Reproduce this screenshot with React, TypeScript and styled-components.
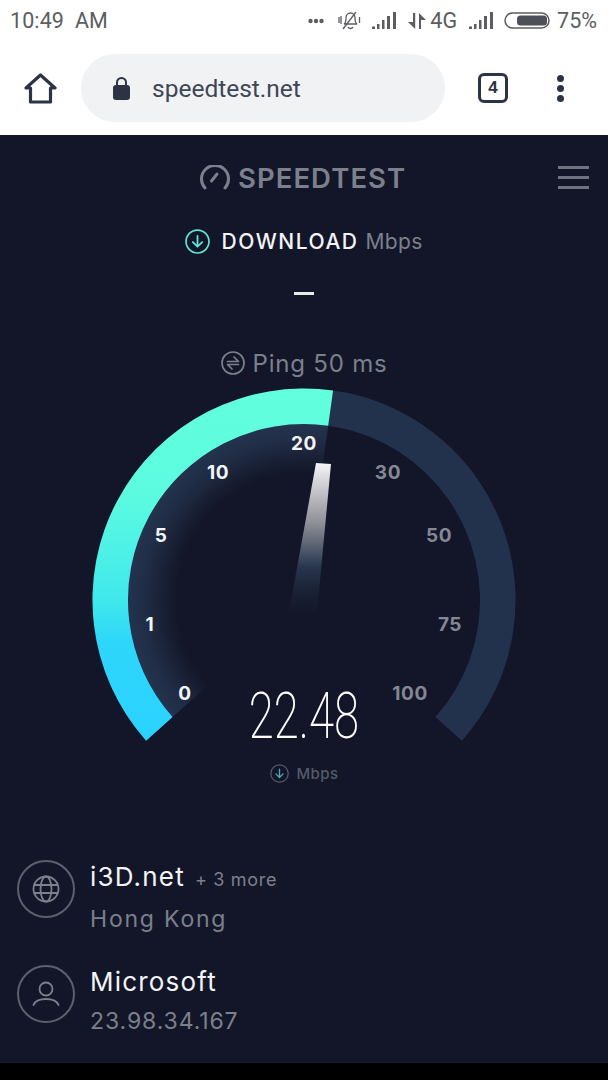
import React from "react";
import styled, { createGlobalStyle } from "styled-components";

const Global = createGlobalStyle`
  html, body { margin: 0; padding: 0; background: #000; }
  * { box-sizing: border-box; }
`;

const Page = styled.div`
  width: 608px;
  height: 1080px;
  display: flex;
  flex-direction: column;
  background: #000;
  overflow: hidden;
  font-family: Inter, "Liberation Sans", sans-serif;
`;

const TopChrome = styled.header`
  height: 135px;
  background: #fff;
  display: flex;
  flex-direction: column;
  flex: none;
`;

const StatusBar = styled.div`
  height: 44px;
  display: flex;
  align-items: center;
  justify-content: space-between;
  padding: 0 11px 3px 10px;
  color: #5b5d60;
  font-family: Roboto, "Liberation Sans", sans-serif;
  font-size: 21.5px;
`;

const StatusTime = styled.span`
  white-space: pre;
  letter-spacing: 0.1px;
`;

const StatusIcons = styled.div`
  display: flex;
  align-items: center;
`;

const StatusItem = styled.span<{ $gap: number }>`
  display: flex;
  align-items: center;
  margin-left: ${(p) => p.$gap}px;
`;

const Toolbar = styled.div`
  height: 91px;
  display: flex;
  align-items: center;
  padding-bottom: 3px;
`;

const HomeSlot = styled.div`
  display: flex;
  width: 81px;
  padding-left: 24px;
`;

const UrlPill = styled.div`
  width: 364px;
  height: 68px;
  border-radius: 34px;
  background: #f0f2f4;
  display: flex;
  align-items: center;
  padding-left: 32px;
  gap: 22px;
  color: #3f4656;
  font-family: Roboto, "Liberation Sans", sans-serif;
  font-size: 24.5px;
`;

const TabCount = styled.div`
  width: 30px;
  height: 30px;
  margin-left: 33px;
  border: 3px solid #2c3344;
  border-radius: 6px;
  display: flex;
  align-items: center;
  justify-content: center;
  color: #2c3344;
  font-family: "Liberation Sans", sans-serif;
  font-weight: 700;
  font-size: 17px;
`;

const MenuDots = styled.div`
  margin-left: 49px;
  display: flex;
  flex-direction: column;
  align-items: center;
  gap: 3px;
`;

const MenuDot = styled.span`
  width: 7px;
  height: 7px;
  border-radius: 50%;
  background: #2c3344;
`;

const Stage = styled.main`
  height: 928px;
  background: #131628;
  display: flex;
  flex-direction: column;
  align-items: center;
  flex: none;
  position: relative;
`;

const Brand = styled.div`
  height: 84px;
  width: 100%;
  display: grid;
  grid-template-columns: 200px 1fr 50px;
  align-items: center;
  color: #7c808c;
`;

const BrandMark = styled.div`
  grid-column: 2;
  display: flex;
  align-items: center;
  gap: 8px;
`;

const BrandName = styled.span`
  font-size: 27.5px;
  font-weight: 600;
  letter-spacing: 1.05px;
  line-height: 1;
  padding-top: 3px;
`;

const Burger = styled.div`
  display: flex;
  flex-direction: column;
  gap: 7px;
  width: 31px;
`;

const BurgerLine = styled.span`
  height: 3px;
  background: #6f7380;
`;

const DirectionRow = styled.div`
  height: 46px;
  display: flex;
  align-items: center;
  font-size: 21px;
  margin-top: -1px;
`;

const DirectionName = styled.span`
  color: #f3f4f6;
  font-weight: 500;
  letter-spacing: 1.55px;
  margin: 0 7px 0 11px;
`;

const DirectionUnit = styled.span`
  color: #7c808c;
  letter-spacing: 0.3px;
`;

const Dash = styled.div`
  width: 20px;
  height: 3px;
  background: #e8e9ec;
  margin-top: 28px;
`;

const PingRow = styled.div`
  display: flex;
  align-items: center;
  gap: 8px;
  margin-top: 54px;
  height: 28px;
  color: #7c808c;
  font-size: 24px;
  letter-spacing: 0.8px;
`;

const Gauge = styled.div`
  position: relative;
  width: 608px;
  height: 380px;
  margin-top: 3px;
`;

const GaugeSvg = styled.svg`
  display: block;
`;

const Tick = styled.text<{ $active?: boolean }>`
  font-family: Inter, "Liberation Sans", sans-serif;
  font-weight: 700;
  font-size: 19px;
  letter-spacing: 0.6px;
  fill: ${(p) => (p.$active ? "#f2f4f6" : "#858894")};
  text-anchor: middle;
  dominant-baseline: central;
`;

const Reading = styled.div`
  position: absolute;
  left: 0;
  right: 0;
  top: 301px;
  display: flex;
  flex-direction: column;
  align-items: center;
`;

const ReadingValue = styled.div`
  font-family: Roboto, "Liberation Sans", sans-serif;
  font-weight: 200;
  font-size: 65px;
  line-height: 70px;
  color: #fff;
  transform: scaleX(0.7);
`;

const ReadingUnit = styled.div`
  display: flex;
  align-items: center;
  gap: 8px;
  margin-top: 13px;
  color: #555b6a;
  font-size: 15px;
  font-weight: 500;
  letter-spacing: 0.4px;
`;

const Servers = styled.section`
  width: 100%;
  display: flex;
  flex-direction: column;
  gap: 28px;
  padding: 99px 0 0 17px;
`;

const ServerRow = styled.div`
  display: flex;
  gap: 15px;
  align-items: flex-start;
`;

const ServerBadge = styled.div`
  width: 58px;
  height: 58px;
  border: 2px solid #5c606d;
  border-radius: 50%;
  display: flex;
  align-items: center;
  justify-content: center;
  flex: none;
  margin-top: 1px;
`;

const ServerText = styled.div`
  display: flex;
  flex-direction: column;
  gap: 4px;
`;

const ServerName = styled.div`
  display: flex;
  align-items: baseline;
  gap: 10px;
  color: #f3f4f6;
  font-size: 26px;
  line-height: 36px;
  letter-spacing: 1.2px;
`;

const ServerExtra = styled.span`
  color: #7c808c;
  font-size: 18px;
  letter-spacing: 0.7px;
`;

const ServerDetail = styled.div<{ $tracking: number }>`
  color: #7c808c;
  font-size: 23px;
  line-height: 34px;
  letter-spacing: ${(p) => p.$tracking}px;
`;

const CX = 304;
const CY = 220;

const polar = (r: number, deg: number): [number, number] => {
  const a = (deg * Math.PI) / 180;
  return [CX + r * Math.sin(a), CY - r * Math.cos(a)];
};

const band = (outer: number, inner: number, from: number, to: number) => {
  const [ax, ay] = polar(outer, from);
  const [bx, by] = polar(outer, to);
  const [cx, cy] = polar(inner, to);
  const [dx, dy] = polar(inner, from);
  const large = to - from > 180 ? 1 : 0;
  return `M${ax} ${ay}A${outer} ${outer} 0 ${large} 1 ${bx} ${by}L${cx} ${cy}A${inner} ${inner} 0 ${large} 0 ${dx} ${dy}Z`;
};

const ticks = [
  { label: "0", x: 185, y: 313, active: true },
  { label: "1", x: 150, y: 244, active: true },
  { label: "5", x: 161, y: 155, active: true },
  { label: "10", x: 218, y: 92, active: true },
  { label: "20", x: 304, y: 63, active: true },
  { label: "30", x: 388, y: 92 },
  { label: "50", x: 439, y: 155 },
  { label: "75", x: 450, y: 244 },
  { label: "100", x: 410, y: 313 },
];

const DownCircle = ({ size, color, arrow }: { size: number; color: string; arrow: string }) => (
  <svg width={size} height={size} viewBox="0 0 24 24" fill="none">
    <circle cx="12" cy="12" r="11" stroke={color} strokeWidth="1.6" />
    <path d="M12 6.500v10M7.500 12.500l4.500 4.500 4.500-4.500" stroke={arrow} strokeWidth="1.7" strokeLinecap="round" strokeLinejoin="round" />
  </svg>
);

const Signal = () => (
  <svg width="25" height="17" viewBox="0 0 25 17" fill="#5b5d60">
    <rect x="0" y="14.500" width="3" height="2.500" />
    <rect x="5" y="12" width="2.500" height="5" />
    <rect x="10" y="8" width="2.500" height="9" />
    <rect x="15" y="4" width="3" height="13" />
    <rect x="21" y="0" width="3" height="17" />
  </svg>
);

export default function App() {
  return (
    <Page>
      <Global />
      <TopChrome>
        <StatusBar>
          <StatusTime>10:49  AM</StatusTime>
          <StatusIcons>
            <StatusItem $gap={0}>
              <svg width="16" height="6" viewBox="0 0 16 6" fill="#5b5d60">
                <circle cx="2.500" cy="3" r="2.200" />
                <circle cx="8" cy="3" r="2.200" />
                <circle cx="13.500" cy="3" r="2.200" />
              </svg>
            </StatusItem>
            <StatusItem $gap={14}>
              <svg width="24" height="20" viewBox="0 0 24 20" fill="none" stroke="#5b5d60" strokeWidth="1.300">
                <path d="M6 13c2-1 2-3 2-6s2-5 4.500-5S17 4 17 7s0 5 2 6z" />
                <path d="M10 16c1 2 4 2 5 0" />
                <path d="M5 18L18 1" />
                <path d="M1 6v6M3 5v8M21.500 6v6" />
              </svg>
            </StatusItem>
            <StatusItem $gap={10}>
              <Signal />
            </StatusItem>
            <StatusItem $gap={10}>
              <svg width="20" height="18" viewBox="0 0 20 18" fill="#5b5d60">
                <path d="M6 1h2.200v16L1 10h5zM12 1l7 7h-5v9h-2z" />
              </svg>
            </StatusItem>
            <StatusItem $gap={3}>4G</StatusItem>
            <StatusItem $gap={12}>
              <Signal />
            </StatusItem>
            <StatusItem $gap={10}>
              <svg width="46" height="17" viewBox="0 0 46 17" fill="none">
                <rect x="1" y="1" width="44" height="15" rx="7.500" stroke="#5b5d60" strokeWidth="1.500" />
                <rect x="13" y="3.500" width="30" height="10" rx="3.500" fill="#4d5058" />
              </svg>
            </StatusItem>
            <StatusItem $gap={7}>75%</StatusItem>
          </StatusIcons>
        </StatusBar>
        <Toolbar>
          <HomeSlot>
            <svg width="33" height="31" viewBox="0 0 33 31" fill="none" stroke="#2c3344" strokeWidth="3.200" strokeLinejoin="round" strokeLinecap="round">
              <path d="M2 15L16.500 2 31 15h-4.500v14h-20V15z" />
            </svg>
          </HomeSlot>
          <UrlPill>
            <svg width="17" height="23" viewBox="0 0 17 23" fill="none">
              <rect x="0" y="8" width="17" height="15" rx="3" fill="#2c3344" />
              <path d="M4 9V5.500a4.500 4.500 0 0 1 9 0V9" stroke="#2c3344" strokeWidth="2" />
            </svg>
            <span>speedtest.net</span>
          </UrlPill>
          <TabCount>4</TabCount>
          <MenuDots>
            <MenuDot />
            <MenuDot />
            <MenuDot />
          </MenuDots>
        </Toolbar>
      </TopChrome>
      <Stage>
        <Brand>
          <BrandMark>
            <svg width="30" height="25" viewBox="0 0 30 25" fill="none" stroke="#7c808c" strokeWidth="3" strokeLinecap="round">
              <path d="M5 23a13.500 13.500 0 1 1 20 0" />
              <path d="M11.500 16l5.500-7" />
            </svg>
            <BrandName>SPEEDTEST</BrandName>
          </BrandMark>
          <Burger>
            <BurgerLine />
            <BurgerLine />
            <BurgerLine />
          </Burger>
        </Brand>
        <DirectionRow>
          <DownCircle size={25} color="#5fe5d8" arrow="#5fe5d8" />
          <DirectionName>DOWNLOAD</DirectionName>
          <DirectionUnit>Mbps</DirectionUnit>
        </DirectionRow>
        <Dash />
        <PingRow>
          <svg width="24" height="24" viewBox="0 0 24 24" fill="none" stroke="#7c808c" strokeWidth="1.700" strokeLinecap="round" strokeLinejoin="round">
            <circle cx="12" cy="12" r="11" />
            <path d="M6.500 10.500h11L13 6M17.500 13.500h-11L11 18" />
          </svg>
          <span>Ping 50 ms</span>
        </PingRow>
        <Gauge>
          <GaugeSvg width="608" height="380" viewBox="0 0 608 380">
            <defs>
              <linearGradient id="sweep" gradientUnits="userSpaceOnUse" x1="0" y1="10" x2="0" y2="360">
                <stop offset="0" stopColor="#62ffdd" />
                <stop offset="0.3" stopColor="#5cfbe0" />
                <stop offset="0.6" stopColor="#40e8ec" />
                <stop offset="0.72" stopColor="#2ed6fb" />
                <stop offset="1" stopColor="#2ad2ff" />
              </linearGradient>
              <radialGradient id="glow" gradientUnits="userSpaceOnUse" cx={CX} cy={CY} r="177">
                <stop offset="0.72" stopColor="#24344f" stopOpacity="0" />
                <stop offset="0.9" stopColor="#24344f" stopOpacity="0.75" />
                <stop offset="1" stopColor="#24344f" stopOpacity="1" />
              </radialGradient>
              <linearGradient id="needle" gradientUnits="userSpaceOnUse" x1="0" y1="83" x2="0" y2="232">
                <stop offset="0" stopColor="#f5f5f6" />
                <stop offset="0.12" stopColor="#d6d6da" />
                <stop offset="0.4" stopColor="#8f9098" />
                <stop offset="0.7" stopColor="#27364e" />
                <stop offset="1" stopColor="#1b2436" stopOpacity="0.1" />
              </linearGradient>
            </defs>
            <path d={band(176, 110, -131.7, 7.9)} fill="url(#glow)" />
            <path d={band(211.5, 176, -131.7, 131.7)} fill="#22324d" />
            <path d={band(211.5, 176, -131.7, 7.9)} fill="url(#sweep)" />
            <polygon points="316,83 331,84 317,232 289,232" fill="url(#needle)" />
            {ticks.map((t) => (
              <Tick key={t.label} x={t.x} y={t.y} $active={t.active}>
                {t.label}
              </Tick>
            ))}
          </GaugeSvg>
          <Reading>
            <ReadingValue>22.48</ReadingValue>
            <ReadingUnit>
              <DownCircle size={19} color="#555b6a" arrow="#4fa9b4" />
              <span>Mbps</span>
            </ReadingUnit>
          </Reading>
        </Gauge>
        <Servers>
          <ServerRow>
            <ServerBadge>
              <svg width="28" height="28" viewBox="0 0 28 28" fill="none" stroke="#7c808c" strokeWidth="1.800">
                <circle cx="14" cy="14" r="12.500" />
                <ellipse cx="14" cy="14" rx="5.500" ry="12.500" />
                <path d="M2 10h24M2 18h24" />
              </svg>
            </ServerBadge>
            <ServerText>
              <ServerName>
                i3D.net <ServerExtra>+ 3 more</ServerExtra>
              </ServerName>
              <ServerDetail $tracking={1.8}>Hong Kong</ServerDetail>
            </ServerText>
          </ServerRow>
          <ServerRow>
            <ServerBadge>
              <svg width="28" height="28" viewBox="0 0 28 28" fill="none" stroke="#7c808c" strokeWidth="1.800" strokeLinecap="round">
                <circle cx="14" cy="9" r="6.500" />
                <path d="M1.500 25c2-5 7-6 12.500-6s10.500 1 12.500 6" />
              </svg>
            </ServerBadge>
            <ServerText>
              <ServerName>Microsoft</ServerName>
              <ServerDetail $tracking={0.9}>23.98.34.167</ServerDetail>
            </ServerText>
          </ServerRow>
        </Servers>
      </Stage>
    </Page>
  );
}
